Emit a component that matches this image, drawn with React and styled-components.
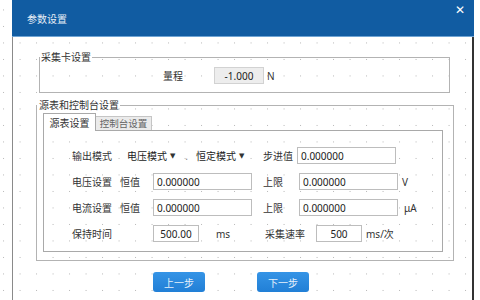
import styled, { createGlobalStyle } from 'styled-components';

const GlobalStyle = createGlobalStyle`
  html, body {
    margin: 0;
    padding: 0;
    background-color: #fff;
    background-image: radial-gradient(circle, #b4b4b4 0.7px, transparent 0.9px);
    background-size: 16.5px 16.5px;
    background-position: -4.7px 1.7px;
    font-family: "Noto Sans", "Noto Sans CJK SC", sans-serif;
    font-size: 10px;
    color: #333;
    overflow: hidden;
  }
`;

const Dialog = styled.div`
  margin-left: 12px;
  width: 462px;
  height: 100vh;
  box-sizing: border-box;
  border-left: 1px solid #8a8a8a;
  border-right: 2px solid #333;
`;

const Header = styled.div`
  display: flex;
  justify-content: space-between;
  align-items: center;
  height: 37px;
  margin-left: -1px;
  margin-right: -2px;
  padding: 0 9px 0 15px;
  background: #115ca2;
  border-bottom: 1px solid #6fa4d4;
  box-sizing: border-box;
`;

const Title = styled.span`
  color: #e8eef6;
  font-size: 10px;
  line-height: 14px;
  margin-top: 2px;
`;

const Close = styled.span`
  align-self: flex-start;
  margin-top: 3px;
  color: #fff;
  font-family: "DejaVu Sans", sans-serif;
  font-weight: bold;
  font-size: 12px;
  line-height: 14px;
`;

const Group = styled.fieldset`
  margin: ${({ $top }) => $top}px 0 0 ${({ $left }) => $left}px;
  width: ${({ $width }) => $width}px;
  box-sizing: border-box;
  padding: 0;
  border: 1px solid #b3b3b3;
  min-inline-size: 0;
`;

const Legend = styled.legend`
  padding: 0 1px 0 ${({ $indent }) => $indent}px;
  font-size: 10px;
  line-height: 14px;
  color: #333;
`;

const GroupBody = styled.div`
  padding: ${({ $pad }) => $pad};
`;

const Line = styled.div`
  display: flex;
  align-items: center;
  height: 17px;
`;

const Label = styled.span`
  width: ${({ $w }) => $w}px;
  flex-shrink: 0;
  white-space: nowrap;
  line-height: 14px;
`;

const Field = styled.div`
  width: ${({ $w }) => $w}px;
  height: 17px;
  flex-shrink: 0;
  box-sizing: border-box;
  border: 1px solid ${({ $muted }) => ($muted ? '#d2d2d2' : '#bdbdbd')};
  background: ${({ $muted }) => ($muted ? '#ededed' : '#fff')};
  display: flex;
  align-items: center;
  justify-content: ${({ $center }) => ($center ? 'center' : 'flex-start')};
  padding-left: ${({ $center }) => ($center ? 0 : 3)}px;
  margin-right: ${({ $after }) => $after || 0}px;
  font-size: 10px;
  color: #222;
`;

const Combo = styled.div`
  width: ${({ $w }) => $w}px;
  height: 17px;
  flex-shrink: 0;
  box-sizing: border-box;
  background: #fff;
  display: flex;
  align-items: center;
  padding-left: 1px;
  gap: 3px;
  white-space: nowrap;
  color: #222;
`;

const Arrow = styled.span`
  font-family: "DejaVu Sans", sans-serif;
  font-size: 7px;
  color: #333;
`;

const Sep = styled.span`
  width: 17px;
  flex-shrink: 0;
  text-align: center;
  color: #888;
`;

const Unit = styled.span`
  margin-left: ${({ $gap }) => $gap}px;
  color: #333;
`;

const TabBar = styled.div`
  display: flex;
  align-items: flex-end;
  height: 17px;
`;

const Tab = styled.div`
  box-sizing: border-box;
  width: ${({ $active }) => ($active ? 53 : 56)}px;
  height: ${({ $active }) => ($active ? 18 : 14)}px;
  margin-bottom: ${({ $active }) => ($active ? -1 : 0)}px;
  position: relative;
  z-index: ${({ $active }) => ($active ? 1 : 0)};
  border: 1px solid ${({ $active }) => ($active ? '#a9a9a9' : '#c5c5c5')};
  border-bottom: none;
  border-left: ${({ $active }) => ($active ? '1px solid #a9a9a9' : 'none')};
  background: ${({ $active }) => ($active ? '#fff' : '#ebebeb')};
  color: ${({ $active }) => ($active ? '#333' : '#666')};
  display: flex;
  align-items: center;
  justify-content: center;
  font-size: ${({ $active }) => ($active ? 10 : 9.5)}px;
  line-height: 12px;
`;

const Panel = styled.div`
  border: 1px solid #a9a9a9;
  padding: 16px 0 9px 28px;
  display: flex;
  flex-direction: column;
  gap: 9px;
`;

const Buttons = styled.div`
  display: flex;
  gap: 52px;
  margin-top: 11px;
  padding-left: 140px;
`;

const Button = styled.button`
  width: 52px;
  height: 20px;
  border: none;
  border-radius: 3px;
  background: linear-gradient(#3594e6, #217fd6);
  color: #e6f1fb;
  font-family: inherit;
  font-size: 10px;
  padding: 0;
`;

export default function App() {
  return (
    <>
      <GlobalStyle />
      <Dialog>
        <Header>
          <Title>参数设置</Title>
          <Close>✕</Close>
        </Header>

        <Group $top={13} $left={26} $width={411}>
          <Legend $indent={1}>采集卡设置</Legend>
          <GroupBody $pad="3px 0 8px 123px">
            <Line>
              <Label $w={51}>量程</Label>
              <Field $w={50} $muted $center>-1.000</Field>
              <Unit $gap={3}>N</Unit>
            </Line>
          </GroupBody>
        </Group>

        <Group $top={5} $left={23} $width={418}>
          <Legend $indent={2}>源表和控制台设置</Legend>
          <GroupBody $pad="1px 10px 8px 6px">
            <TabBar>
              <Tab $active>源表设置</Tab>
              <Tab>控制台设置</Tab>
            </TabBar>
            <Panel>
              <Line>
                <Label $w={54}>输出模式</Label>
                <Combo $w={52}>电压模式<Arrow>▼</Arrow></Combo>
                <Sep>.</Sep>
                <Combo $w={55}>恒定模式<Arrow>▼</Arrow></Combo>
                <Label $w={13} />
                <Label $w={34}>步进值</Label>
                <Field $w={99}>0.000000</Field>
              </Line>
              <Line>
                <Label $w={48}>电压设置</Label>
                <Label $w={33}>恒值</Label>
                <Field $w={99} $after={11}>0.000000</Field>
                <Label $w={36}>上限</Label>
                <Field $w={99}>0.000000</Field>
                <Unit $gap={4}>V</Unit>
              </Line>
              <Line>
                <Label $w={48}>电流设置</Label>
                <Label $w={33}>恒值</Label>
                <Field $w={99} $after={11}>0.000000</Field>
                <Label $w={36}>上限</Label>
                <Field $w={99}>0.000000</Field>
                <Unit $gap={6}>μA</Unit>
              </Line>
              <Line>
                <Label $w={81}>保持时间</Label>
                <Field $w={46} $center $after={17}>500.00</Field>
                <Label $w={49}>ms</Label>
                <Label $w={51}>采集速率</Label>
                <Field $w={46} $center>500</Field>
                <Unit $gap={4}>ms/次</Unit>
              </Line>
            </Panel>
          </GroupBody>
        </Group>

        <Buttons>
          <Button>上一步</Button>
          <Button>下一步</Button>
        </Buttons>
      </Dialog>
    </>
  );
}
